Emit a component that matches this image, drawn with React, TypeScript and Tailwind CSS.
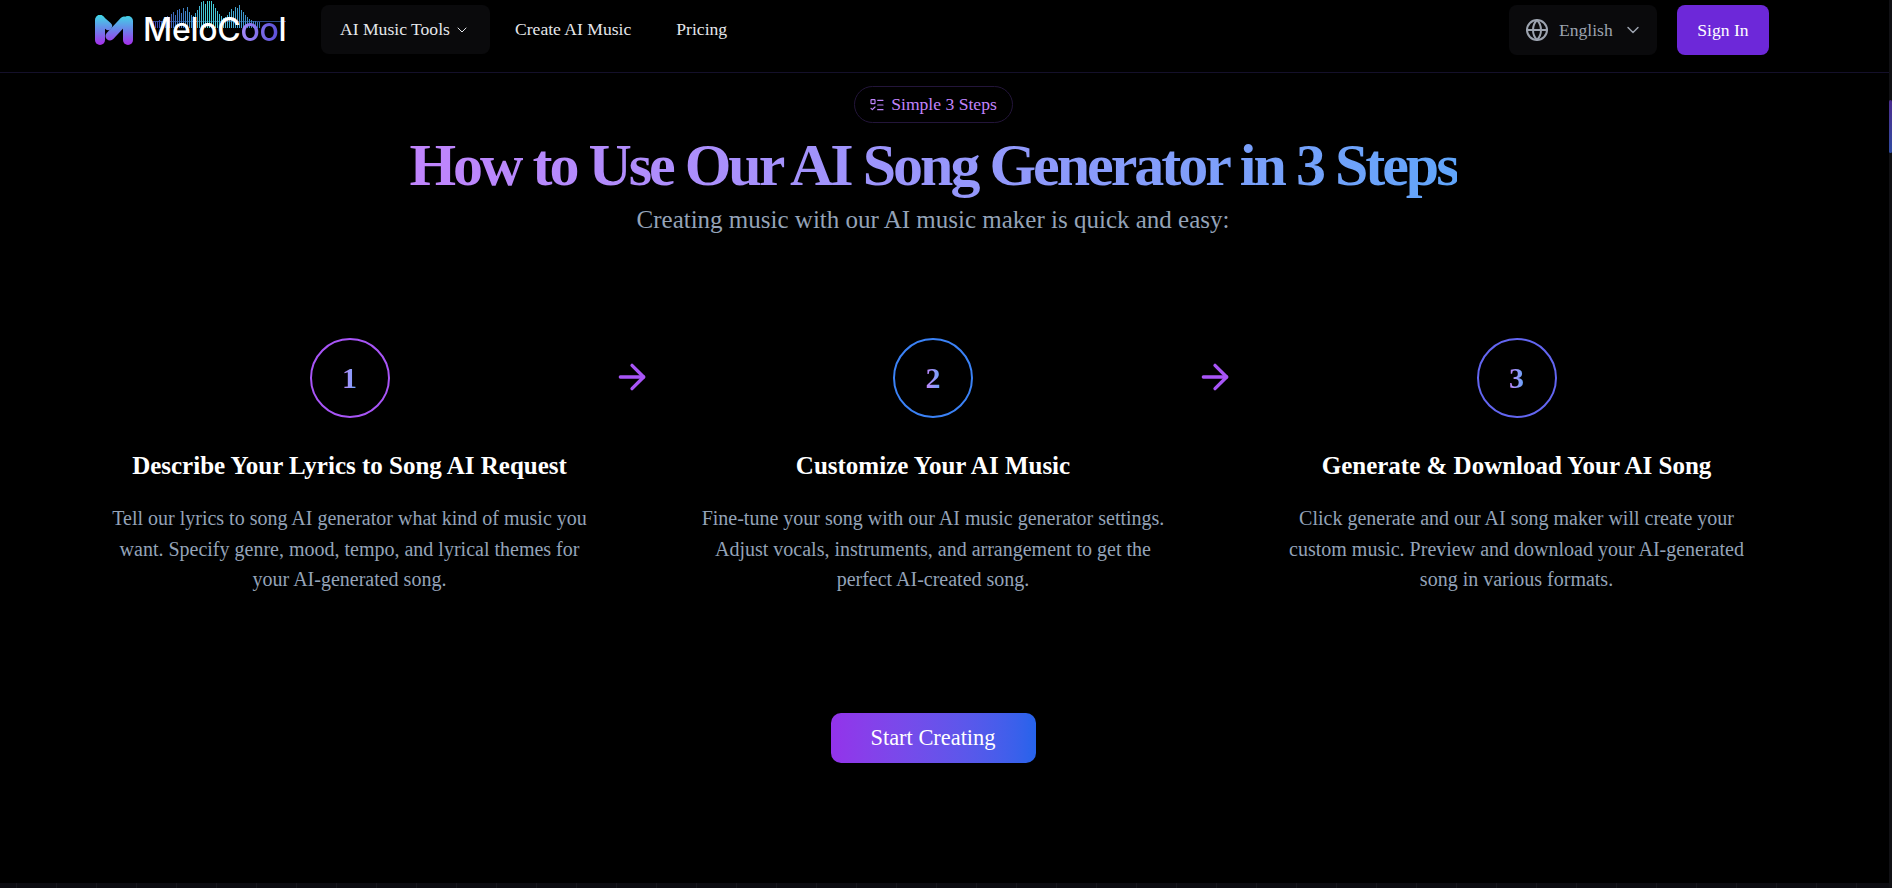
import { ArrowRight, ChevronDown, Globe, ListTodo } from 'lucide-react';

const waveBars = [
  2, 3, 2, 3, 4, 3, 5, 6, 8, 7, 10, 12, 9, 14, 15, 11, 16, 13, 17, 12, 9, 8, 11, 14, 18, 22, 26, 20, 28, 31, 24, 20, 16,
  13, 10, 8, 6, 7, 9, 12, 15, 13, 17, 16, 19, 14, 12, 9, 7, 5, 4, 3, 3, 2, 2,
];

const steps = [
  {
    num: '1',
    ring: 'border-[#a855f7]',
    title: 'Describe Your Lyrics to Song AI Request',
    desc: 'Tell our lyrics to song AI generator what kind of music you want. Specify genre, mood, tempo, and lyrical themes for your AI-generated song.',
  },
  {
    num: '2',
    ring: 'border-[#3b82f6]',
    title: 'Customize Your AI Music',
    desc: 'Fine-tune your song with our AI music generator settings. Adjust vocals, instruments, and arrangement to get the perfect AI-created song.',
  },
  {
    num: '3',
    ring: 'border-[#6366f1]',
    title: 'Generate & Download Your AI Song',
    desc: 'Click generate and our AI song maker will create your custom music. Preview and download your AI-generated song in various formats.',
  },
];

function Logo() {
  return (
    <div className="relative flex w-[193px] items-center gap-[9px]">
      <svg width="39" height="30" viewBox="0 0 39 30" fill="none" className="shrink-0">
        <defs>
          <linearGradient id="logoM" x1="0" y1="0" x2="0" y2="30" gradientUnits="userSpaceOnUse">
            <stop offset="0" stopColor="#3fd8e6" />
            <stop offset="0.5" stopColor="#6b83ea" />
            <stop offset="1" stopColor="#a82deb" />
          </linearGradient>
        </defs>
        <path d="M5 5 L5 25" stroke="url(#logoM)" strokeWidth="10" strokeLinecap="round" />
        <path d="M5 4 L13 11" stroke="url(#logoM)" strokeWidth="8" strokeLinecap="round" />
        <path d="M15 21 L29 6" stroke="url(#logoM)" strokeWidth="9" strokeLinecap="round" />
        <path d="M33 6 L33 25" stroke="url(#logoM)" strokeWidth="10" strokeLinecap="round" />
      </svg>
      <span className="relative z-10 font-['Inter',sans-serif] text-[32px] leading-none font-medium tracking-[-0.3px] text-white">
        MeloC<span className="bg-gradient-to-r from-[#a78bfa] to-[#5b4fd6] bg-clip-text text-transparent">oo</span>l
      </span>
      <svg width="135" height="28" viewBox="0 0 135 28" className="absolute top-[-13px] left-[56px]">
        <defs>
          <linearGradient id="logoWave" x1="0" y1="0" x2="135" y2="0" gradientUnits="userSpaceOnUse">
            <stop offset="0" stopColor="#3b3fb0" />
            <stop offset="0.25" stopColor="#3f7fc4" />
            <stop offset="0.42" stopColor="#45d4d8" />
            <stop offset="0.65" stopColor="#3f9fd0" />
            <stop offset="1" stopColor="#2f3f9a" />
          </linearGradient>
        </defs>
        <rect x="0" y="20" width="135" height="1" fill="#2b4a86" />
        {waveBars.map((h, i) => (
          <rect key={i} x={i * 2} y={27 - Math.min(h + 4, 27)} width="1" height={Math.min(h + 4, 27)} fill="url(#logoWave)" />
        ))}
      </svg>
    </div>
  );
}

function Header() {
  return (
    <header className="flex h-[73px] shrink-0 items-start border-b border-[#14102a] pt-[5px] pr-[120px] pl-[95px] text-[17.6px]">
      <div className="flex h-[50px] items-center">
        <Logo />
      </div>
      <nav className="ml-[33px] flex h-[50px] items-center gap-[9px] pb-[1px] text-[#e5e7eb]">
        <div className="flex h-full w-[169px] items-center gap-[4px] rounded-lg bg-[#0a0a0c] pl-[19px]">
          AI Music Tools
          <ChevronDown size={16} strokeWidth={1.5} />
        </div>
        <div className="px-[16px]">Create AI Music</div>
        <div className="ml-[4px] px-[16px]">Pricing</div>
      </nav>
      <div className="ml-auto flex h-[50px] items-center gap-[20px]">
        <div className="flex h-full w-[148px] items-center gap-[10px] rounded-lg bg-[#0a0a0c] pl-[16px] text-[#9ca3af]">
          <Globe size={24} strokeWidth={2} className="shrink-0" />
          English
          <ChevronDown size={20} strokeWidth={1.75} className="shrink-0" />
        </div>
        <div className="flex h-full w-[92px] items-center justify-center rounded-lg bg-[#6d28d9] text-white">Sign In</div>
      </div>
    </header>
  );
}

function StepsRow() {
  return (
    <div className="mt-[102px] flex items-start justify-center">
      {steps.map((step, i) => (
        <div key={step.num} className="flex items-start">
          <div className="flex w-[480px] flex-col items-center text-center">
            <div className={`flex h-[80px] w-[80px] items-center justify-center rounded-full border-2 ${step.ring}`}>
              <span className="bg-gradient-to-r from-[#c084fc] to-[#60a5fa] bg-clip-text text-[30px] leading-none font-bold text-transparent">
                {step.num}
              </span>
            </div>
            <h3 className="mt-[32px] text-[25px] leading-[32px] font-bold text-white">{step.title}</h3>
            <p className="mt-[21px] text-[20px] leading-[30.72px] text-[#94a3b8]">{step.desc}</p>
          </div>
          {i < steps.length - 1 && <ArrowRight size={40} strokeWidth={2} className="mt-[19px] mr-[41.5px] ml-[22px] shrink-0 text-[#a855f7]" />}
        </div>
      ))}
    </div>
  );
}

export default function App() {
  return (
    <div className="flex h-screen w-full overflow-hidden bg-black font-['Liberation_Serif',serif]">
      <div className="flex min-w-0 flex-1 flex-col">
        <Header />
        <main className="flex flex-col pr-[23px]">
          <div className="mt-[13px] flex justify-center">
            <div className="flex h-[37px] w-[159px] items-center justify-center gap-[6px] rounded-full border border-[#23153a] text-[17.6px] text-[#c084fc]">
              <ListTodo size={16} strokeWidth={1.75} />
              Simple 3 Steps
            </div>
          </div>
          <h1 className="mt-[12px] text-center text-[60px] leading-[60px] font-bold tracking-[-3px]">
            <span className="bg-gradient-to-r from-[#c084fc] to-[#60a5fa] bg-clip-text text-transparent">How to Use Our AI Song Generator in 3 Steps</span>
          </h1>
          <p className="mt-[9px] text-center text-[25px] leading-[32px] text-[#94a3b8]">Creating music with our AI music maker is quick and easy:</p>
          <StepsRow />
          <div className="mt-[118px] flex justify-center">
            <div className="flex h-[50px] w-[205px] items-center justify-center rounded-[10px] bg-gradient-to-r from-[#9333ea] to-[#2563eb] text-[22.4px] text-white">
              Start Creating
            </div>
          </div>
        </main>
        <div className="mt-auto h-[5px] shrink-0 bg-[#0c0c11] bg-[linear-gradient(to_right,#16161c_1px,transparent_1px)] bg-[size:40px_40px] bg-[position:16px_0]" />
      </div>
      <div className="flex w-[3px] shrink-0 flex-col bg-[#101014] pt-[100px]">
        <div className="h-[53px] rounded-sm bg-gradient-to-b from-[#4a2c8f] to-[#2d4aa0]" />
      </div>
    </div>
  );
}
